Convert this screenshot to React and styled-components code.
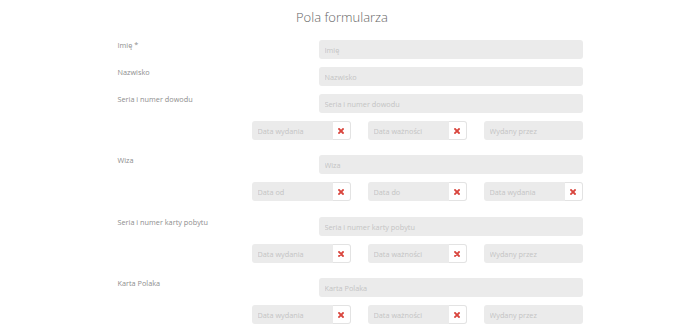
import React from "react"
import styled, { createGlobalStyle } from "styled-components"

const GlobalStyle = createGlobalStyle`
    body {
        margin: 0;
        background: #ffffff;
        font-family: "Open Sans", "Liberation Sans", sans-serif;
    }
`

const sections = [
    { label: "Imię *", placeholder: "Imię", space: 0 },
    { label: "Nazwisko", placeholder: "Nazwisko", space: 8 },
    {
        label: "Seria i numer dowodu",
        placeholder: "Seria i numer dowodu",
        space: 8,
        sub: [
            { placeholder: "Data wydania", clear: true },
            { placeholder: "Data ważności", clear: true },
            { placeholder: "Wydany przez" },
        ],
    },
    {
        label: "Wiza",
        placeholder: "Wiza",
        space: 15,
        sub: [
            { placeholder: "Data od", clear: true },
            { placeholder: "Data do", clear: true },
            { placeholder: "Data wydania", clear: true },
        ],
    },
    {
        label: "Seria i numer karty pobytu",
        placeholder: "Seria i numer karty pobytu",
        space: 16,
        sub: [
            { placeholder: "Data wydania", clear: true },
            { placeholder: "Data ważności", clear: true },
            { placeholder: "Wydany przez" },
        ],
    },
    {
        label: "Karta Polaka",
        placeholder: "Karta Polaka",
        space: 15,
        sub: [
            { placeholder: "Data wydania", clear: true },
            { placeholder: "Data ważności", clear: true },
            { placeholder: "Wydany przez" },
        ],
    },
]

const RemoveIcon = () => (
    <svg width="6" height="6" viewBox="0 0 6 6">
        <path d="M1 1 L5 5 M5 1 L1 5" stroke="#d9453d" strokeWidth="1.8" strokeLinecap="square" />
    </svg>
)

const App = () => {
    return (
        <Page>
            <GlobalStyle />
            <Title>Pola formularza</Title>
            <Form>
                {sections.map((s, i) => (
                    <Group key={i} $space={s.space}>
                        <FieldRow>
                            <Label>{s.label}</Label>
                            <Input placeholder={s.placeholder} />
                        </FieldRow>
                        {s.sub && (
                            <SubRow>
                                {s.sub.map((f, j) => (
                                    <InputGroup key={j}>
                                        <Input placeholder={f.placeholder} $joined={f.clear} />
                                        {f.clear && (
                                            <ClearButton>
                                                <RemoveIcon />
                                            </ClearButton>
                                        )}
                                    </InputGroup>
                                ))}
                            </SubRow>
                        )}
                    </Group>
                ))}
            </Form>
        </Page>
    )
}

const Page = styled.div`
    width: 700px;
    padding-top: 7px;
`

const Title = styled.h1`
    margin: 0 16px 0 0;
    text-align: center;
    font-size: 13px;
    line-height: 20px;
    font-weight: 300;
    color: #666666;
`

const Form = styled.div`
    width: 465px;
    margin: 13px auto 0;
    display: flex;
    flex-direction: column;
`

const Group = styled.div`
    display: flex;
    flex-direction: column;
    gap: 8px;
    margin-top: ${(p) => p.$space}px;
`

const FieldRow = styled.div`
    display: grid;
    grid-template-columns: 201px 264px;
`

const Label = styled.div`
    font-size: 7.3px;
    line-height: 11px;
    color: #8e8e8e;
`

const SubRow = styled.div`
    margin-left: 134px;
    display: grid;
    grid-template-columns: repeat(3, 99px);
    column-gap: 17px;
`

const InputGroup = styled.div`
    display: flex;
    height: 19px;
`

const Input = styled.input`
    box-sizing: border-box;
    flex: 1;
    min-width: 0;
    height: 19px;
    padding: 0 6px;
    border: none;
    border-radius: ${(p) => (p.$joined ? "3px 0 0 3px" : "3px")};
    background: #ebebeb;
    font-family: "Open Sans", "Liberation Sans", sans-serif;
    font-size: 7.3px;
    color: #555555;
    outline: none;
    &::placeholder {
        color: #c4c4c4;
    }
`

const ClearButton = styled.button`
    box-sizing: border-box;
    width: 18px;
    height: 19px;
    padding: 0;
    display: flex;
    align-items: center;
    justify-content: center;
    background: #ffffff;
    border: 1px solid #e3e3e3;
    border-left: none;
    border-radius: 0 3px 3px 0;
    cursor: pointer;
`

export default App
